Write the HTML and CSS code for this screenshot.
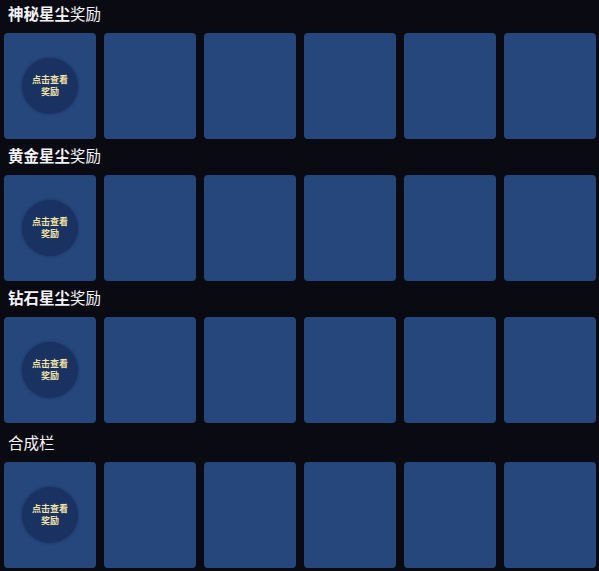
FILE: index.html
```html
<!DOCTYPE html>
<html lang="zh">
<head>
<meta charset="utf-8">
<link rel="stylesheet" href="styles.css">
</head>
<body>
<div class="page">
  <section class="section">
    <h2 class="title"><b>神秘星尘</b>奖励</h2>
    <div class="grid">
      <div class="card"><div class="badge"><span>点击查看</span><span>奖励</span></div></div>
      <div class="card"></div><div class="card"></div><div class="card"></div><div class="card"></div><div class="card"></div>
    </div>
  </section>
  <section class="section">
    <h2 class="title"><b>黄金星尘</b>奖励</h2>
    <div class="grid">
      <div class="card"><div class="badge"><span>点击查看</span><span>奖励</span></div></div>
      <div class="card"></div><div class="card"></div><div class="card"></div><div class="card"></div><div class="card"></div>
    </div>
  </section>
  <section class="section">
    <h2 class="title"><b>钻石星尘</b>奖励</h2>
    <div class="grid">
      <div class="card"><div class="badge"><span>点击查看</span><span>奖励</span></div></div>
      <div class="card"></div><div class="card"></div><div class="card"></div><div class="card"></div><div class="card"></div>
    </div>
  </section>
  <section class="section last">
    <h2 class="title">合成栏</h2>
    <div class="grid">
      <div class="card"><div class="badge"><span>点击查看</span><span>奖励</span></div></div>
      <div class="card"></div><div class="card"></div><div class="card"></div><div class="card"></div><div class="card"></div>
    </div>
  </section>
</div>
</body>
</html>
```
FILE: styles.css
```css
html, body {
  margin: 0;
  padding: 0;
  background: #0a0b12;
}
.page {
  width: 599px;
  height: 571px;
  overflow: hidden;
  padding-top: 3px;
  box-sizing: border-box;
  font-family: "Noto Sans CJK SC", "Noto Sans", sans-serif;
}
.section {
  margin-bottom: 6px;
}
.section.last {
  padding-top: 3px;
}
.title {
  margin: 0 0 10px 8px;
  height: 20px;
  line-height: 20px;
  font-size: 15.5px;
  font-weight: 400;
  color: #f2f3f6;
}
.title b {
  font-weight: 700;
}
.grid {
  display: grid;
  grid-template-columns: repeat(6, 92px);
  column-gap: 8px;
  padding-left: 4px;
}
.card {
  height: 106px;
  background: #26477c;
  border-radius: 4px;
  display: flex;
  align-items: center;
  justify-content: center;
}
.badge {
  width: 56px;
  height: 56px;
  border-radius: 50%;
  background: #1a3262;
  box-shadow: 0 0 2px 1px rgba(26, 50, 98, 0.6);
  color: #f1e2a6;
  font-size: 9px;
  font-weight: 700;
  text-align: center;
  display: flex;
  flex-direction: column;
  align-items: center;
  justify-content: center;
}
.badge span {
  display: block;
  height: 12px;
  line-height: 12px;
}
```
